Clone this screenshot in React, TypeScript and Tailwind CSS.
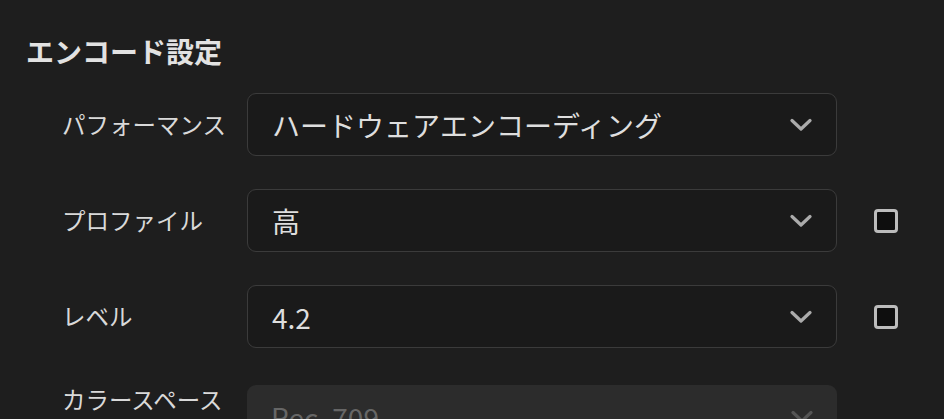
import React from "react";

const font = { fontFamily: '"Noto Sans CJK JP", "Noto Sans", sans-serif' };

function Chevron({ color }: { color: string }) {
  return (
    <svg width="22" height="14" viewBox="0 0 22 14" fill="none">
      <path d="M2 2.5 L11 11 L20 2.5" stroke={color} strokeWidth="3.2" strokeLinecap="round" strokeLinejoin="round" />
    </svg>
  );
}

function Checkbox() {
  return <div className="ml-[37px] h-6 w-6 shrink-0 rounded-[4px] border-[3px] border-[#bcbcbc] bg-[#0e0e0e]" />;
}

function Row({
  label,
  value,
  checkbox,
}: {
  label: string;
  value: string;
  checkbox?: boolean;
}) {
  return (
    <div className="flex h-[63px] items-center">
      <div className="w-[221px] shrink-0 pl-[36px] text-[23.5px] leading-none text-[#d9d9d9]">{label}</div>
      <div className="flex h-[63px] w-[590px] shrink-0 items-center justify-between rounded-[9px] border-[1.5px] border-[#3b3b3b] bg-[#1a1a1a] pl-[24px] pr-[24px]">
        <span className="text-[28px] leading-none text-[#dedede]">{value}</span>
        <Chevron color="#ababab" />
      </div>
      {checkbox && <Checkbox />}
    </div>
  );
}

export default function App() {
  return (
    <div className="h-[419px] w-full overflow-hidden bg-[#1e1e1e] pl-[26px] pt-[35px]" style={font}>
      <h1 className="text-[28px] font-bold leading-[32px] text-[#e2e2e2]">エンコード設定</h1>
      <div className="mt-[26px] flex flex-col gap-[33px]">
        <Row label="パフォーマンス" value="ハードウェアエンコーディング" />
        <Row label="プロファイル" value="高" checkbox />
        <Row label="レベル" value="4.2" checkbox />
        <div className="mt-[4px] flex items-start">
          <div className="w-[221px] shrink-0 pl-[36px] pt-[3px] text-[23.5px] leading-none text-[#d9d9d9]">カラースペース</div>
          <div className="flex h-[63px] w-[590px] shrink-0 items-center justify-between rounded-[9px] bg-[#2c2c2c] pl-[24px] pr-[24px]">
            <span className="text-[28px] leading-none text-[#666666]">Rec. 709</span>
            <Chevron color="#555555" />
          </div>
        </div>
      </div>
    </div>
  );
}
